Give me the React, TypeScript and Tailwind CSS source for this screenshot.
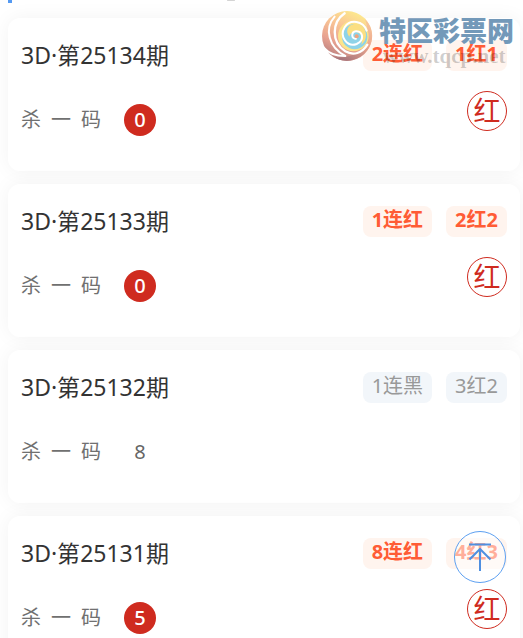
type Issue = {
  id: string;
  streak: string;
  record: string;
  code: number;
  hit: boolean;
};

const issues: Issue[] = [
  { id: "25134", streak: "2连红", record: "1红1", code: 0, hit: true },
  { id: "25133", streak: "1连红", record: "2红2", code: 0, hit: true },
  { id: "25132", streak: "1连黑", record: "3红2", code: 8, hit: false },
  { id: "25131", streak: "8连红", record: "4红3", code: 5, hit: true },
];

function Badge({ text, hit }: { text: string; hit: boolean }) {
  return (
    <span
      className={
        hit
          ? "h-[31px] rounded-lg bg-[#fff4ee] px-[9px] text-xl leading-7 font-bold text-[#ff5c35]"
          : "h-[31px] rounded-lg bg-[#f2f6fa] px-[9px] text-xl leading-7 text-[#999]"
      }
    >
      {text}
    </span>
  );
}

function IssueCard({ issue }: { issue: Issue }) {
  return (
    <article className="rounded-xl bg-white px-[13px] pt-[22px] pb-[35px] shadow-[0_0_20px_rgba(0,0,0,0.05)]">
      <div className="flex items-center justify-between">
        <h2 className="text-[23px] leading-[31px] text-[#333]">3D·第{issue.id}期</h2>
        <div className="flex gap-[14px]">
          <Badge text={issue.streak} hit={issue.hit} />
          <Badge text={issue.record} hit={issue.hit} />
        </div>
      </div>
      <div className="mt-5 flex items-start justify-between">
        <div className="mt-[13px] flex items-center gap-[23px]">
          <span className="w-20 text-xl leading-8 text-[#707070] [text-align-last:justify]">杀 一 码</span>
          <span
            className={
              issue.hit
                ? "size-8 rounded-full bg-[#cf2b1f] text-center text-xl leading-8 font-medium text-white"
                : "size-8 text-center text-xl leading-8 text-[#666]"
            }
          >
            {issue.code}
          </span>
        </div>
        {issue.hit && (
          <span className="size-10 rounded-full border border-[#cf2b1f] text-center text-[27px] leading-[38px] text-[#cf2b1f]">
            红
          </span>
        )}
      </div>
    </article>
  );
}

function SwirlLogo() {
  return (
    <svg viewBox="18 16 154 156" className="size-[52px]" aria-hidden>
      <defs>
        <linearGradient id="shell" x1="0.7" y1="0" x2="0.25" y2="0.95">
          <stop offset="0" stopColor="#fdeb8c" />
          <stop offset="0.35" stopColor="#fac795" />
          <stop offset="0.7" stopColor="#e8a290" />
          <stop offset="1" stopColor="#b98080" />
        </linearGradient>
        <linearGradient id="rim" x1="0.8" y1="0" x2="0.3" y2="1">
          <stop offset="0" stopColor="#f8c79c" />
          <stop offset="0.5" stopColor="#eaa58d" />
          <stop offset="1" stopColor="#a8767c" />
        </linearGradient>
      </defs>
      <circle cx="95" cy="94" r="75" fill="url(#shell)" />
      <path d="M148 42C184 76 174 130 138 154C108 174 76 170 56 158C104 162 148 144 156 98C159 74 154 56 148 42Z" fill="url(#rim)" />
      <circle cx="114" cy="94" r="46" fill="#fbe48b" />
      <circle cx="118" cy="96" r="38" fill="#8ed3e8" />
      <path d="M106 62C128 48 152 66 152 92C152 104 146 114 138 120C144 100 138 84 122 82C110 80 104 88 102 96C92 84 94 70 106 62Z" fill="#fbdf82" />
      <g fill="none" stroke="#fff" strokeLinecap="round">
        <path d="M58 36C26 72 40 128 90 154" strokeWidth="6" />
        <path d="M88 26C50 52 46 112 90 140C114 154 140 146 156 120" strokeWidth="7" />
        <path d="M154 78C144 48 104 42 88 68C70 98 98 128 124 118C148 108 144 78 122 80C106 82 108 104 122 102" strokeWidth="6" />
        <path d="M26 130C42 148 62 154 88 154" strokeWidth="6" />
      </g>
      <circle cx="124" cy="95" r="6" fill="#f0a47e" />
    </svg>
  );
}

function Watermark() {
  return (
    <div className="pointer-events-none absolute top-[10px] right-[9px] flex gap-[6px]">
      <SwirlLogo />
      <div className="flex flex-col">
        <span className="text-[27px] leading-[42px] font-black text-[#7399b9]">特区彩票网</span>
        <span className="-mt-2 pl-1 font-['Liberation_Serif',serif] text-[21px] leading-6 font-bold text-black/20">
          www.tqcp.net
        </span>
      </div>
    </div>
  );
}

export default function App() {
  return (
    <main className="relative h-screen overflow-hidden bg-white font-['Noto_Sans','Noto_Sans_CJK_SC',sans-serif]">
      <div className="flex h-[18px] items-start px-2">
        <span className="h-[3px] w-1 bg-[#559af2]" />
        <span className="ml-[215px] h-px w-2 rounded-full bg-[#d4d4d4]" />
      </div>
      <div className="flex flex-col gap-[13px] pr-[3px] pl-2">
        {issues.map((issue) => (
          <IssueCard key={issue.id} issue={issue} />
        ))}
      </div>
      <Watermark />
      <button
        type="button"
        aria-label="Back to top"
        className="fixed right-[17px] bottom-[55px] flex size-[52px] items-center justify-center rounded-full border border-[#5c9ff0] bg-white/50"
      >
        <svg viewBox="0 0 24 28" className="h-7 w-6" fill="none" stroke="#4f8fe0" strokeWidth="2" aria-hidden>
          <path d="M1 1.5H23M12 28V6M1.5 16.5L12 6L22.5 16.5" />
        </svg>
      </button>
    </main>
  );
}
